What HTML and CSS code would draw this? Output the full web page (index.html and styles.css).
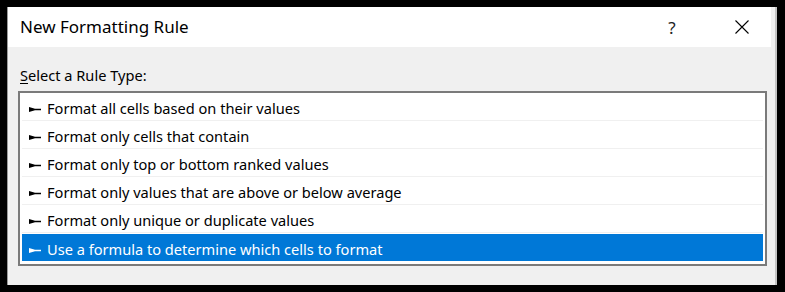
FILE: index.html
```html
<!DOCTYPE html>
<html lang="en">
<head>
<meta charset="UTF-8">
<title>New Formatting Rule</title>
<link rel="stylesheet" href="styles.css">
</head>
<body>

<div class="dialog">
  <!-- title bar -->
  <div class="titlebar">
    <span class="title">New Formatting Rule</span>
    <div class="ctl help">?</div>
    <div class="ctl close">
      <svg width="14" height="14" viewBox="0 0 14 14" aria-hidden="true"><path d="M0.5 0.5L13.5 13.5M13.5 0.5L0.5 13.5" stroke="#000" stroke-width="1.1"/></svg>
    </div>
  </div>

  <!-- body -->
  <div class="content">
    <div class="label"><u>S</u>elect a Rule Type:</div>
    <ul class="rules">
      <li><svg class="arr" width="12" height="5" viewBox="0 0 12 5"><path d="M0 0L6 1.7H12V3.3H6L0 5Z"/></svg>Format all cells based on their values</li>
      <li><svg class="arr" width="12" height="5" viewBox="0 0 12 5"><path d="M0 0L6 1.7H12V3.3H6L0 5Z"/></svg>Format only cells that contain</li>
      <li><svg class="arr" width="12" height="5" viewBox="0 0 12 5"><path d="M0 0L6 1.7H12V3.3H6L0 5Z"/></svg>Format only top or bottom ranked values</li>
      <li><svg class="arr" width="12" height="5" viewBox="0 0 12 5"><path d="M0 0L6 1.7H12V3.3H6L0 5Z"/></svg>Format only values that are above or below average</li>
      <li><svg class="arr" width="12" height="5" viewBox="0 0 12 5"><path d="M0 0L6 1.7H12V3.3H6L0 5Z"/></svg>Format only unique or duplicate values</li>
      <li class="sel"><svg class="arr" width="12" height="5" viewBox="0 0 12 5"><path d="M0 0L6 1.7H12V3.3H6L0 5Z"/></svg>Use a formula to determine which cells to format</li>
    </ul>
  </div>
</div>

</body>
</html>
```

FILE: styles.css
```css
/* ─── Reset ─── */
*,*::before,*::after{box-sizing:border-box;margin:0;padding:0}
body{background:#000;padding:7px 8px 7px 7px;font-family:"Noto Sans","Open Sans",sans-serif;color:#000}

/* ─── Dialog ─── */
.dialog{width:770px;height:278px;background:#f0f0f0;border-left:1px solid #9a9a9a;border-right:2px solid #c4c4c4;display:flex;flex-direction:column}

/* title bar */
.titlebar{height:40px;background:#fff;margin-right:4px;display:flex;align-items:center;padding-left:12px}
.title{flex:1;font-size:17px;line-height:40px}
.ctl{width:46px;height:40px;display:flex;align-items:center;justify-content:center}
.help{font-size:17px;color:#222;margin-right:24px}
.close{margin-right:6px}

/* body */
.content{flex:1;padding:18px 8px 0 10px}
.label{font-size:14.6px;line-height:20px;margin-bottom:6px;padding-left:2px}
.label u{text-underline-offset:2px}

.rules{list-style:none;background:#fff;border:2px solid #7a7a7a;padding:0 2px 3px 2px;width:749px}
.rules li{height:28px;padding:4px 0 0 7px;line-height:23px;font-size:14.6px;border-bottom:1px solid #f0f0f0;white-space:nowrap}
.rules li.sel{border-bottom:none;background:#0078d7;color:#fff;margin-top:1px;height:27px}
.arr{vertical-align:middle;margin:0 6px 2px 0;fill:#000}
.sel .arr{fill:#fff}
```
